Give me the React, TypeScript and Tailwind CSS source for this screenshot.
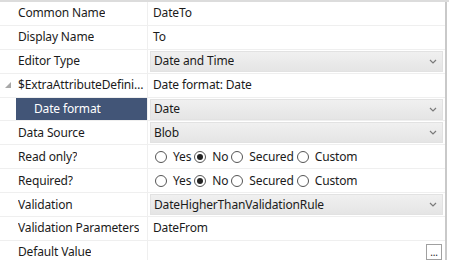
import { ReactNode } from 'react'

const font = { fontFamily: '"Segoe UI", "Noto Sans", "Open Sans", sans-serif' }

function Chevron() {
  return (
    <svg width="8" height="5" viewBox="0 0 8 5" className="shrink-0">
      <path d="M1 1 L4 4 L7 1" fill="none" stroke="#7a7a7a" strokeWidth="1.2" />
    </svg>
  )
}

function Dropdown({ value }: { value: string }) {
  return (
    <div className="mx-[2px] my-[1px] flex h-[21px] flex-1 items-center justify-between border border-[#e2e2e2] bg-gradient-to-b from-[#f0f0f0] to-[#e5e5e5] pl-[3px] pr-[5px]">
      <span className="truncate">{value}</span>
      <Chevron />
    </div>
  )
}

function Radio({ label, checked }: { label: string; checked?: boolean }) {
  return (
    <span className="flex items-center">
      <span className="flex h-[12px] w-[12px] items-center justify-center rounded-full border border-[#555] bg-white">
        {checked && <span className="h-[6px] w-[6px] rounded-full bg-[#222]" />}
      </span>
      <span className="ml-[6px] mr-[3px]">{label}</span>
    </span>
  )
}

function RadioGroup() {
  return (
    <div className="flex items-center pl-[7px]">
      <Radio label="Yes" />
      <Radio label="No" checked />
      <Radio label="Secured" />
      <Radio label="Custom" />
    </div>
  )
}

function Row({
  label,
  children,
  selected,
  indent,
  expander,
}: {
  label: string
  children?: ReactNode
  selected?: boolean
  indent?: boolean
  expander?: boolean
}) {
  return (
    <div className="flex h-[23.9px] border-b border-[#efefef]">
      <div className="flex w-[16px] shrink-0 items-center justify-center">
        {expander && (
          <svg width="6" height="6" viewBox="0 0 6 6">
            <path d="M6 0 L6 6 L0 6 Z" fill="#a8a8a8" />
          </svg>
        )}
      </div>
      <div
        className={
          'flex w-[132px] shrink-0 items-center overflow-hidden border-r border-[#efefef] ' +
          (selected ? 'bg-[#425577] text-white ' : '') +
          (indent ? 'pl-[18px]' : 'pl-[2px]')
        }
      >
        <span className="truncate">{label}</span>
      </div>
      <div className="flex min-w-0 flex-1 items-center">{children}</div>
    </div>
  )
}

function Text({ children }: { children: ReactNode }) {
  return <span className="pl-[5px]">{children}</span>
}

export default function App() {
  return (
    <div
      className="h-[260px] w-[449px] overflow-hidden bg-white text-[12px] tracking-[-0.15px] text-[#1b1b1b]"
      style={font}
    >
      <div className="h-[2px] bg-[#dcdcdc]" />
      <div className="w-[447px] border-r-2 border-[#c9c9c9]">
        <Row label="Common Name">
          <Text>DateTo</Text>
        </Row>
        <Row label="Display Name">
          <Text>To</Text>
        </Row>
        <Row label="Editor Type">
          <Dropdown value="Date and Time" />
        </Row>
        <Row label="$ExtraAttributeDefinitions" expander>
          <Text>Date format: Date</Text>
        </Row>
        <Row label="Date format" selected indent>
          <Dropdown value="Date" />
        </Row>
        <Row label="Data Source">
          <Dropdown value="Blob" />
        </Row>
        <Row label="Read only?">
          <RadioGroup />
        </Row>
        <Row label="Required?">
          <RadioGroup />
        </Row>
        <Row label="Validation">
          <Dropdown value="DateHigherThanValidationRule" />
        </Row>
        <Row label="Validation Parameters">
          <Text>DateFrom</Text>
        </Row>
        <Row label="Default Value">
          <div className="flex flex-1 justify-end pr-[3px]">
            <div className="flex h-[16px] w-[16px] items-end justify-center border border-[#a0a0a0] bg-white pb-[2px] text-[10px] leading-none">
              ...
            </div>
          </div>
        </Row>
      </div>
    </div>
  )
}
